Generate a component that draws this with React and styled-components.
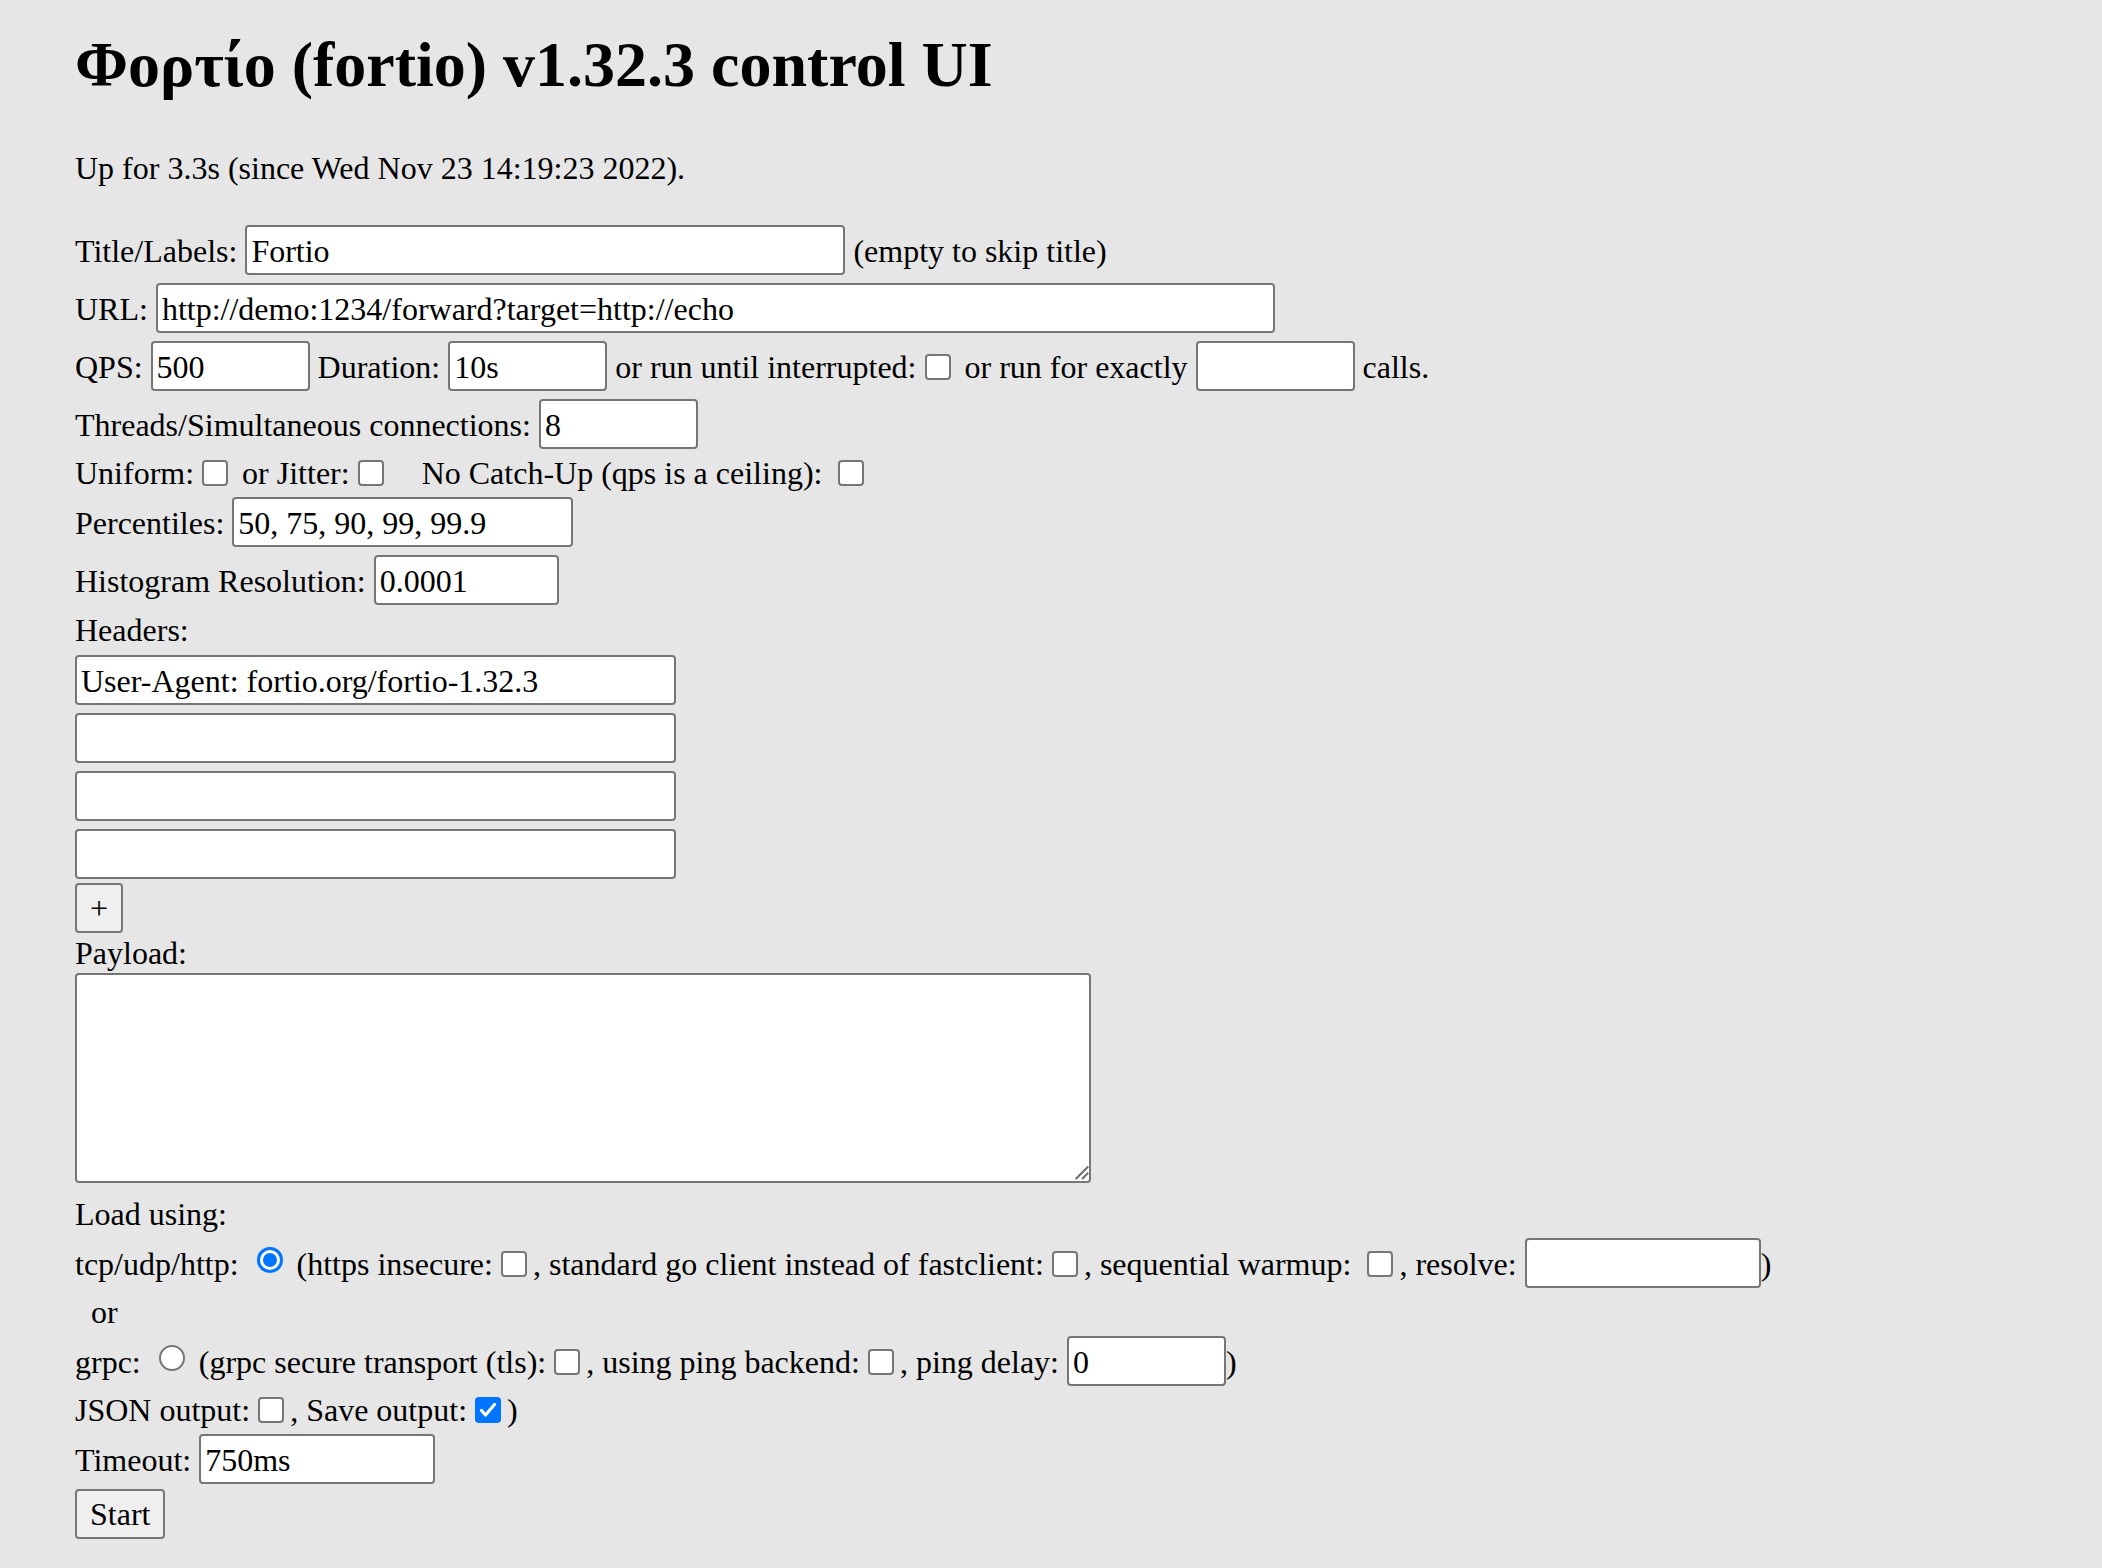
import React from 'react';
import styled, { createGlobalStyle, css } from 'styled-components';

const GlobalStyle = createGlobalStyle`
  html, body {
    margin: 0;
    background: #e6e6e6;
  }
  body {
    font-family: "Liberation Serif", "Times New Roman", serif;
    color: #000;
  }
`;

const Page = styled.div`
  padding: 28px 75px 30px;
  font-size: 32px;
  line-height: 40px;
`;

const Title = styled.h1`
  margin: 0;
  font-size: 64px;
  line-height: 74px;
  font-weight: bold;
`;

const Uptime = styled.p`
  margin: 46px 0 0;
`;

const Form = styled.form`
  margin-top: 33px;
`;

const Line = styled.div`
  white-space: nowrap;
  ${p => p.$tall && css`line-height: 42px;`}
`;

const TextField = styled.input.attrs({ type: 'text' })`
  box-sizing: border-box;
  width: ${p => p.$w}px;
  height: 50px;
  margin: 4px 0;
  padding: 3px 4px 0;
  border: 2px solid #767676;
  border-radius: 4px;
  background: #fff;
  font-family: "Liberation Serif", "Times New Roman", serif;
  font-size: 32px;
  color: #000;
  vertical-align: baseline;
  outline: none;
`;

const Box = styled.span`
  display: inline-block;
  box-sizing: border-box;
  width: 26px;
  height: 26px;
  margin: 0 6px 0 8px;
  vertical-align: -2px;
  border-radius: 4px;
  ${p => p.$on
    ? css`background: #0075ff;`
    : css`background: #fff; border: 2px solid #767676;`}

  svg {
    display: block;
  }
`;

const Round = styled.span`
  display: inline-block;
  box-sizing: border-box;
  width: 26px;
  height: 26px;
  margin: 0 6px 0 10px;
  vertical-align: 2px;
  border-radius: 50%;
  ${p => p.$on
    ? css`
        background: #0075ff;
        box-shadow: inset 0 0 0 3px #0075ff, inset 0 0 0 6px #fff;
      `
    : css`background: #fff; border: 2px solid #767676;`}
`;

const Button = styled.button`
  box-sizing: border-box;
  height: 50px;
  margin-top: ${p => p.$top || 0}px;
  padding: 0 13px;
  border: 2px solid #767676;
  border-radius: 4px;
  background: #efefef;
  font-family: "Liberation Serif", "Times New Roman", serif;
  font-size: 32px;
  color: #000;
  vertical-align: baseline;
`;

const PayloadBox = styled.div`
  position: relative;
  width: 1016px;
  height: 210px;
  margin: 0 0 11px;
`;

const PayloadArea = styled.textarea`
  box-sizing: border-box;
  display: block;
  width: 100%;
  height: 100%;
  border: 2px solid #767676;
  border-radius: 4px;
  background: #fff;
  resize: none;
  outline: none;
`;

const Grip = styled.svg`
  position: absolute;
  right: 2px;
  bottom: 2px;
`;

const Check = ({ on }) => (
  <Box $on={on}>
    {on && (
      <svg width="26" height="26" viewBox="0 0 26 26">
        <path d="M6.5 13.5 L10.5 18 L19.5 7.5" fill="none" stroke="#fff" strokeWidth="3.2" strokeLinecap="round" strokeLinejoin="round" />
      </svg>
    )}
  </Box>
);

const headers = ['User-Agent: fortio.org/fortio-1.32.3', '', '', ''];

export default function App() {
  return (
    <Page>
      <GlobalStyle />
      <Title>Φορτίο (fortio) v1.32.3 control UI</Title>
      <Uptime>Up for 3.3s (since Wed Nov 23 14:19:23 2022).</Uptime>
      <Form onSubmit={e => e.preventDefault()}>
        <Line>
          Title/Labels: <TextField $w={600} defaultValue="Fortio" /> (empty to skip title)
        </Line>
        <Line>
          URL: <TextField $w={1119} defaultValue="http://demo:1234/forward?target=http://echo" />
        </Line>
        <Line>
          QPS: <TextField $w={159} defaultValue="500" /> Duration: <TextField $w={159} defaultValue="10s" /> or
          run until interrupted:<Check /> or run for exactly <TextField $w={159} /> calls.
        </Line>
        <Line>
          Threads/Simultaneous connections: <TextField $w={159} defaultValue="8" />
        </Line>
        <Line>
          Uniform:<Check /> or Jitter:<Check />{' \u00a0\u00a0\u00a0'}No Catch-Up (qps is a ceiling): <Check />
        </Line>
        <Line>
          Percentiles: <TextField $w={341} defaultValue="50, 75, 90, 99, 99.9" />
        </Line>
        <Line>
          Histogram Resolution: <TextField $w={185} defaultValue="0.0001" />
        </Line>
        <Line $tall>Headers:</Line>
        {headers.map((h, i) => (
          <Line key={i}>
            <TextField $w={601} defaultValue={h} />
          </Line>
        ))}
        <Line>
          <Button type="button">+</Button>
        </Line>
        <Line>Payload:</Line>
        <PayloadBox>
          <PayloadArea />
          <Grip width="16" height="16" viewBox="0 0 16 16">
            <path d="M2.7 14 L15.2 1.5 M9 14 L15.2 7.8" stroke="#6e6e6e" strokeWidth="2" />
          </Grip>
        </PayloadBox>
        <Line>Load using:</Line>
        <Line>
          tcp/udp/http: <Round $on /> (https insecure:<Check />, standard go client instead of
          fastclient:<Check />, sequential warmup: <Check />, resolve: <TextField $w={236} />)
        </Line>
        <Line>{'\u00a0\u00a0'}or</Line>
        <Line>
          grpc: <Round /> (grpc secure transport (tls):<Check />, using ping backend:<Check />, ping
          delay: <TextField $w={159} defaultValue="0" />)
        </Line>
        <Line>
          JSON output:<Check />, Save output:<Check on />)
        </Line>
        <Line>
          Timeout: <TextField $w={236} defaultValue="750ms" />
        </Line>
        <Line>
          <Button type="submit" $top={1}>Start</Button>
        </Line>
      </Form>
    </Page>
  );
}
